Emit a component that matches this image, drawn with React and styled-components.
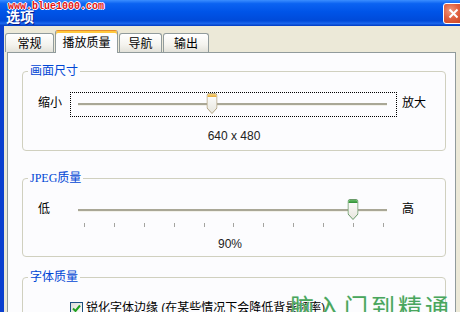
import styled, { createGlobalStyle } from 'styled-components';

const Global = createGlobalStyle`
  * { box-sizing: border-box; }
  body { margin: 0; background: #ECE9D8; overflow: hidden; }
`;

const Window = styled.div`
  position: relative;
  width: 460px;
  height: 312px;
  overflow: hidden;
  display: flex;
  flex-direction: column;
  background: #ECE9D8;
  font-family: "Liberation Sans", "Noto Sans CJK SC", sans-serif;
  font-size: 12px;
  color: #000;
`;

const TitleBar = styled.div`
  position: relative;
  flex: none;
  height: 26px;
  display: flex;
  align-items: center;
  padding-left: 6px;
  background: linear-gradient(#3B8EFF 0%, #0B63F2 14%, #0054E8 45%, #004AD9 80%, #1A66EC 90%, #003BC2 100%);
`;

const Title = styled.span`
  color: #fff;
  font-weight: bold;
  font-size: 14px;
  line-height: 15px;
  margin-top: 8px;
  text-shadow: 1px 1px 0 #0A1E8C;
`;

const SiteMark = styled.span`
  position: absolute;
  left: 8px;
  top: 1px;
  font-family: "Liberation Mono", monospace;
  font-weight: bold;
  font-size: 10px;
  line-height: 12px;
  color: #E31212;
  text-shadow: 1px 0 #fff, -1px 0 #fff, 0 1px #fff, 0 -1px #fff;
`;

const CloseButton = styled.div`
  flex: none;
  margin-left: auto;
  margin-right: -4px;
  width: 21px;
  height: 21px;
  margin-top: 1px;
  border: 1px solid #fff;
  border-radius: 3px;
  background: radial-gradient(circle at 35% 35%, #F09A80 0%, #E0603F 45%, #C8401E 100%);
  display: flex;
  align-items: center;
  justify-content: center;
`;

const Body = styled.div`
  flex: 1;
  display: flex;
  flex-direction: column;
  border-left: 4px solid #0B40CF;
  padding: 0 4px 0 1px;
  min-height: 0;
`;

const TabRow = styled.div`
  position: relative;
  z-index: 1;
  flex: none;
  height: 27px;
  margin-bottom: -1px;
  display: flex;
  align-items: flex-end;
  gap: 1px;
`;

const Tab = styled.div`
  flex: none;
  width: ${(p) => p.$w}px;
  height: ${(p) => (p.$active ? 23 : 19)}px;
  margin-bottom: ${(p) => (p.$active ? 0 : 1)}px;
  display: flex;
  align-items: center;
  justify-content: center;
  padding-top: ${(p) => (p.$active ? 1 : 2)}px;
  border: 1px solid #919B9C;
  border-bottom: none;
  border-top-color: ${(p) => (p.$active ? '#E68B2C' : '#919B9C')};
  border-radius: 3px 3px 0 0;
  background: ${(p) =>
    p.$active ? '#FCFCFE' : 'linear-gradient(#FFFFFF, #F4F3EE 60%, #E3E2DA)'};
  box-shadow: ${(p) => (p.$active ? 'inset 0 2px 0 #FFC83C' : 'none')};
  line-height: 14px;
`;

const Panel = styled.div`
  flex: 1;
  margin-left: 2px;
  border: 1px solid #919B9C;
  border-bottom: none;
  background: #FCFCFE;
  padding: 11px 9px 0 14px;
`;

const Group = styled.fieldset`
  margin: ${(p) => p.$mt || 0}px 0 0 0;
  min-width: 0;
  border: 1px solid #D0D0BF;
  border-radius: 4px;
  padding: ${(p) => p.$pt}px 0 ${(p) => p.$pb}px 0;
`;

const Legend = styled.legend`
  margin-left: 5px;
  padding: 0 2px;
  color: #0046D5;
  font-family: "Liberation Serif", "Noto Sans CJK SC", serif;
  font-size: 12px;
  line-height: 14px;
`;

const SliderRow = styled.div`
  display: flex;
  align-items: flex-start;
  padding: 0 19px 0 15px;
`;

const Side = styled.span`
  flex: none;
  width: 24px;
  margin-top: 4px;
  line-height: 14px;
`;

const SliderBox = styled.div`
  flex: 1;
  margin: 0 5px 0 8px;
  border: 1px dotted ${(p) => (p.$focused ? '#000' : 'transparent')};
  padding: 0 9px 0 7px;
`;

const TrackArea = styled.div`
  position: relative;
  height: 23px;
  padding-top: 10px;
`;

const Channel = styled.div`
  height: 3px;
  background: #A9A796;
  border-bottom: 1px solid #F2F1EA;
`;

const Range = styled.div`
  position: absolute;
  top: 0;
  bottom: 0;
  left: 6px;
  right: 4px;
`;

const ThumbWrap = styled.div`
  position: absolute;
  top: 0;
  transform: translateX(-50%);
  width: 11px;
  height: 21px;
`;

const Ticks = styled.div`
  display: flex;
  justify-content: space-between;
  margin: 1px 3px 0 6px;
  height: 4px;
`;

const Tick = styled.span`
  width: 1px;
  height: 4px;
  background: #A4A4A0;
`;

const Caption = styled.div`
  margin-top: ${(p) => p.$mt}px;
  padding-right: ${(p) => p.$pr || 0}px;
  text-align: center;
  line-height: 14px;
  color: #222;
`;

const CheckRow = styled.div`
  display: flex;
  align-items: center;
  padding-left: 47px;
  line-height: 14px;
  white-space: nowrap;
`;

const Box = styled.span`
  flex: none;
  width: 13px;
  height: 13px;
  margin-right: 3px;
  border: 1px solid #1C5180;
  background: linear-gradient(135deg, #DCDCD7, #FFFFFF);
  display: flex;
  align-items: center;
  justify-content: center;
`;

const WaterMark = styled.span`
  position: absolute;
  left: 290px;
  top: 293px;
  font-family: "Noto Sans CJK SC", sans-serif;
  font-size: 24px;
  line-height: 26px;
  letter-spacing: 3px;
  color: #49A65D;
  text-shadow: 0 0 1px #CFE9D4;
  pointer-events: none;
`;

function Thumb({ pct, tone }) {
  const top = tone === 'gold' ? ['#F8D27A', '#E2A93A'] : ['#62BC62', '#2E8E34'];
  const edge = tone === 'gold' ? '#B3A584' : '#6A9A6A';
  const id = `g-${tone}`;
  return (
    <ThumbWrap style={{ left: `${pct}%` }}>
      <svg width="11" height="21" viewBox="0 0 11 21">
        <defs>
          <linearGradient id={id} x1="0" y1="0" x2="0" y2="1">
            <stop offset="0" stopColor="#FFFFFF" />
            <stop offset="1" stopColor="#E6E5DC" />
          </linearGradient>
          <linearGradient id={`${id}t`} x1="0" y1="0" x2="0" y2="1">
            <stop offset="0" stopColor={top[0]} />
            <stop offset="1" stopColor={top[1]} />
          </linearGradient>
        </defs>
        <path
          d="M0.5 2.5 Q0.5 0.5 2.5 0.5 H8.5 Q10.5 0.5 10.5 2.5 V15 L5.5 20.5 L0.5 15 Z"
          fill={`url(#${id})`}
          stroke={edge}
        />
        <path d="M1 2.5 Q1 1 2.5 1 H8.5 Q10 1 10 2.5 V4 H1 Z" fill={`url(#${id}t)`} />
      </svg>
    </ThumbWrap>
  );
}

function Slider({ pct, tone, focused, ticks }) {
  return (
    <SliderBox $focused={focused}>
      <TrackArea>
        <Channel />
        <Range>
          <Thumb pct={pct} tone={tone} />
        </Range>
      </TrackArea>
      {ticks && (
        <Ticks>
          {Array.from({ length: ticks }, (_, i) => (
            <Tick key={i} />
          ))}
        </Ticks>
      )}
    </SliderBox>
  );
}

const tabs = [
  { label: '常规', w: 49 },
  { label: '播放质量', w: 63, active: true },
  { label: '导航', w: 43 },
  { label: '输出', w: 46 },
];

export default function App() {
  return (
    <Window>
      <Global />
      <TitleBar>
        <Title>选项</Title>
        <SiteMark>www.blue1000.com</SiteMark>
        <CloseButton>
          <svg width="11" height="11" viewBox="0 0 11 11">
            <path d="M1.5 1.5 L9.5 9.5 M9.5 1.5 L1.5 9.5" stroke="#fff" strokeWidth="2" />
          </svg>
        </CloseButton>
      </TitleBar>
      <Body>
        <TabRow>
          {tabs.map((t) => (
            <Tab key={t.label} $w={t.w} $active={t.active}>
              {t.label}
            </Tab>
          ))}
        </TabRow>
        <Panel>
          <Group $pt={14} $pb={7}>
            <Legend>画面尺寸</Legend>
            <SliderRow>
              <Side>缩小</Side>
              <Slider pct={42.8} tone="gold" focused />
              <Side>放大</Side>
            </SliderRow>
            <Caption $mt={12}>640 x 480</Caption>
          </Group>
          <Group $mt={20} $pt={13} $pb={5}>
            <Legend>JPEG质量</Legend>
            <SliderRow>
              <Side>低</Side>
              <Slider pct={90} tone="green" ticks={11} />
              <Side>高</Side>
            </SliderRow>
            <Caption $mt={9} $pr={8}>90%</Caption>
          </Group>
          <Group $mt={13} $pt={17} $pb={8}>
            <Legend>字体质量</Legend>
            <CheckRow>
              <Box>
                <svg width="9" height="9" viewBox="0 0 9 9">
                  <path d="M1 4.5 L3.5 7 L8 1.5" fill="none" stroke="#21A121" strokeWidth="2" />
                </svg>
              </Box>
              锐化字体边缘 (在某些情况下会降低背景频率)
            </CheckRow>
          </Group>
        </Panel>
      </Body>
      <WaterMark>脑入门到精通</WaterMark>
    </Window>
  );
}
